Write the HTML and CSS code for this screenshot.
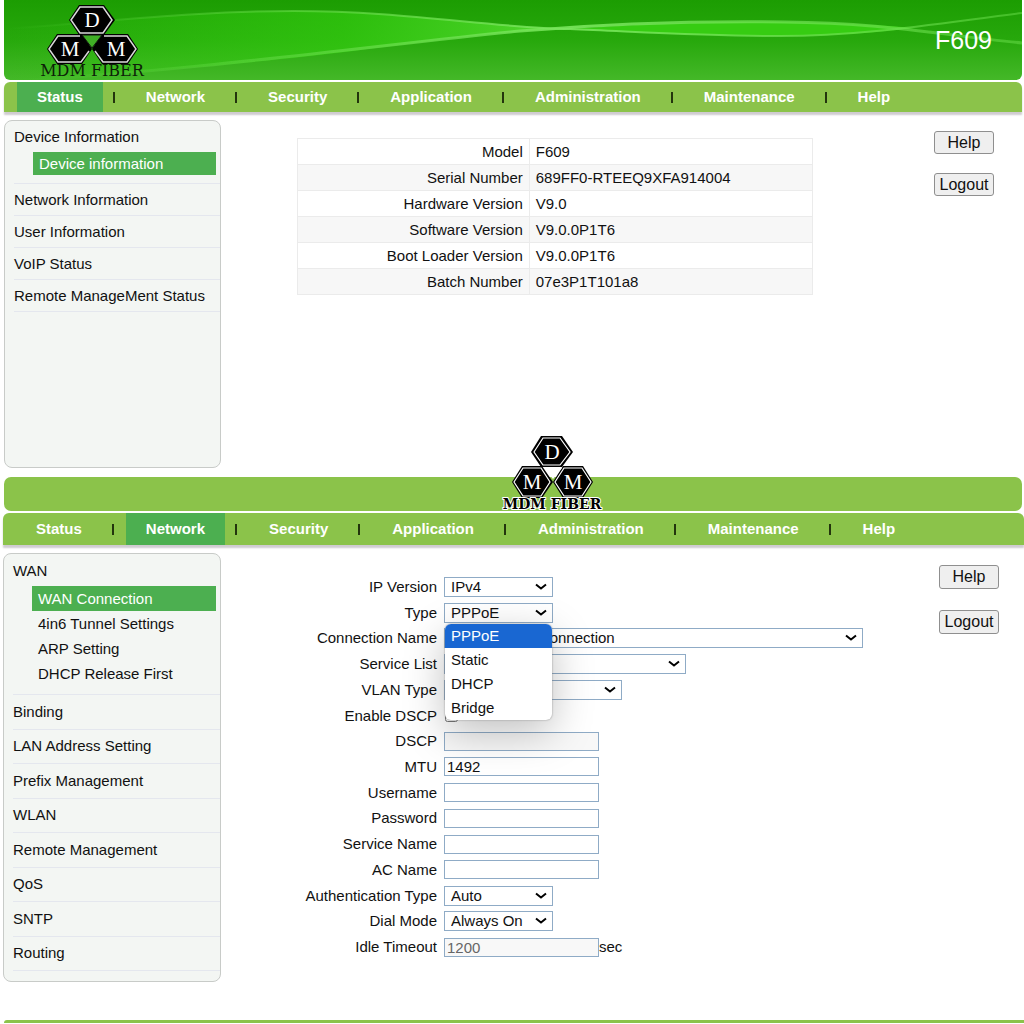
FILE: index.html
```html
<!DOCTYPE html>
<html lang="en">
<head>
<meta charset="utf-8">
<meta name="viewport" content="width=device-width, initial-scale=1">
<title>F609</title>
<link rel="stylesheet" href="styles.css">
</head>
<body>
<section class="screen screen-status">
  <header class="banner">
    <svg class="banner-art" viewBox="0 0 1018 80" preserveAspectRatio="none" aria-hidden="true">
      <defs>
        <linearGradient id="base" x1="0" y1="0" x2="0" y2="1">
          <stop offset="0" stop-color="#1c9d02"/>
          <stop offset="0.5" stop-color="#27a80c"/>
          <stop offset="1" stop-color="#44b828"/>
        </linearGradient>
        <linearGradient id="glow" x1="0" y1="0" x2="1" y2="0">
          <stop offset="0" stop-color="#34d010" stop-opacity="0"/>
          <stop offset="0.6" stop-color="#34d010" stop-opacity="0.6"/>
          <stop offset="1" stop-color="#5ade35" stop-opacity="0.9"/>
        </linearGradient>
        <linearGradient id="edge" x1="0" y1="0" x2="1" y2="0">
          <stop offset="0" stop-color="#6ade4c" stop-opacity="0"/>
          <stop offset="0.25" stop-color="#6ade4c" stop-opacity="0.5"/>
          <stop offset="0.55" stop-color="#7ae65e" stop-opacity="0.9"/>
          <stop offset="1" stop-color="#6ade4c" stop-opacity="0.5"/>
        </linearGradient>
      </defs>
      <rect width="1018" height="80" fill="url(#base)"/>
      <path d="M0 29 C120 20 200 11 290 11 C400 11 490 28 566 29 C490 30 400 46 290 58 C180 69 80 76 20 80 L0 80 Z" fill="url(#glow)"/>
      <path d="M566 29 C640 24 710 21 780 22 C840 23 880 25 910 28 C870 33 830 36 776 36 C690 36 630 32 566 29 Z" fill="#36cc12"/>
      <path d="M0 29 C120 20 200 11 290 11 C400 11 490 28 566 29 C640 32 700 36 776 36 C860 36 930 24 1018 13" fill="none" stroke="url(#edge)" stroke-width="2"/>
      <path d="M20 80 C180 72 400 42 516 31 C600 24 700 21 780 22 C880 23 930 34 1018 43" fill="none" stroke="url(#edge)" stroke-width="3"/>
    </svg>
    <svg class="logo logo-banner" viewBox="0 0 116 78" role="img" aria-label="MDM Fiber">
      <g fill="#000">
        <path d="M35 19 L45 4 H70 L81 19 L70 34 H45 Z"/>
        <path d="M13 48 L23 33 H48 L58 48 L48 63 H23 Z"/>
        <path d="M58 48 L68 33 H94 L104 48 L94 63 H68 Z"/>
      </g>
      <path d="M48 34 H68 L58 47 Z" fill="#3faf25" stroke="#111" stroke-width="1"/>
      <g fill="none" stroke="#d9d9d9" stroke-width="1.5">
        <path d="M37 19 L46 6 H69 L78 19 L69 32 H46 Z"/>
        <path d="M46 35 H24 L15 48 L24 61 H47 L55 50"/>
        <path d="M70 35 H93 L102 48 L93 61 H69 L61 50"/>
      </g>
      <g class="logo-letter">
        <text x="58" y="26">D</text>
        <text x="36" y="55">M</text>
        <text x="82" y="55">M</text>
      </g>
      <text class="logo-name" x="58" y="75">MDM FIBER</text>
    </svg>
    <h1 class="model">F609</h1>
  </header>
  <nav class="tabs" aria-label="Status menu">
    <ul class="tab-list">
      <li><a class="tab active" href="#">Status</a></li>
      <li><a class="tab" href="#">Network</a></li>
      <li><a class="tab" href="#">Security</a></li>
      <li><a class="tab" href="#">Application</a></li>
      <li><a class="tab" href="#">Administration</a></li>
      <li><a class="tab" href="#">Maintenance</a></li>
      <li><a class="tab" href="#">Help</a></li>
    </ul>
  </nav>
  <div class="content">
    <aside class="sidebar">
      <a class="side-title" href="#">Device Information</a>
      <ul class="side-sub">
        <li><a class="active" href="#">Device information</a></li>
      </ul>
      <ul class="side-list">
        <li><a href="#">Network Information</a></li>
        <li><a href="#">User Information</a></li>
        <li><a href="#">VoIP Status</a></li>
        <li><a href="#">Remote ManageMent Status</a></li>
      </ul>
    </aside>
    <main class="panel">
      <table class="info">
        <tbody>
          <tr><th scope="row">Model</th><td>F609</td></tr>
          <tr><th scope="row">Serial Number</th><td>689FF0-RTEEQ9XFA914004</td></tr>
          <tr><th scope="row">Hardware Version</th><td>V9.0</td></tr>
          <tr><th scope="row">Software Version</th><td>V9.0.0P1T6</td></tr>
          <tr><th scope="row">Boot Loader Version</th><td>V9.0.0P1T6</td></tr>
          <tr><th scope="row">Batch Number</th><td>07e3P1T101a8</td></tr>
        </tbody>
      </table>
    </main>
    <div class="actions">
      <button type="button">Help</button>
      <button type="button">Logout</button>
    </div>
  </div>
  <div class="strip">
    <svg class="logo logo-strip" viewBox="0 0 108 76" role="img" aria-label="MDM Fiber">
      <g fill="#000">
        <path d="M33 17 L43 1 H64 L75 17 L64 32 H43 Z"/>
        <path d="M14 47 L24 31 H44 L55 47 L44 63 H24 Z"/>
        <path d="M55 47 L65 31 H85 L95 47 L85 63 H65 Z"/>
      </g>
      <path d="M46 33 H64 L55 44 Z" fill="#fff"/>
      <g fill="none" stroke="#fff" stroke-width="1.2">
        <path d="M36 17 L45 3 H62 L72 17 L62 30 H45 Z"/>
        <path d="M16 47 L25 33 H43 L52 47 L43 61 H25 Z"/>
        <path d="M57 47 L66 33 H84 L93 47 L84 61 H66 Z"/>
      </g>
      <g class="logo-letter">
        <text x="54" y="24">D</text>
        <text x="34" y="54">M</text>
        <text x="75" y="54">M</text>
      </g>
      <text class="logo-name outlined" x="54" y="74">MDM FIBER</text>
    </svg>
  </div>
</section>

<section class="screen screen-network">
  <nav class="tabs" aria-label="Network menu">
    <ul class="tab-list">
      <li><a class="tab" href="#">Status</a></li>
      <li><a class="tab active" href="#">Network</a></li>
      <li><a class="tab" href="#">Security</a></li>
      <li><a class="tab" href="#">Application</a></li>
      <li><a class="tab" href="#">Administration</a></li>
      <li><a class="tab" href="#">Maintenance</a></li>
      <li><a class="tab" href="#">Help</a></li>
    </ul>
  </nav>
  <div class="content">
    <aside class="sidebar">
      <a class="side-title" href="#">WAN</a>
      <ul class="side-sub">
        <li><a class="active" href="#">WAN Connection</a></li>
        <li><a href="#">4in6 Tunnel Settings</a></li>
        <li><a href="#">ARP Setting</a></li>
        <li><a href="#">DHCP Release First</a></li>
      </ul>
      <ul class="side-list">
        <li><a href="#">Binding</a></li>
        <li><a href="#">LAN Address Setting</a></li>
        <li><a href="#">Prefix Management</a></li>
        <li><a href="#">WLAN</a></li>
        <li><a href="#">Remote Management</a></li>
        <li><a href="#">QoS</a></li>
        <li><a href="#">SNTP</a></li>
        <li><a href="#">Routing</a></li>
      </ul>
    </aside>
    <form class="wan-form">
      <div class="row"><label for="ipver">IP Version</label><select id="ipver" class="w-small"><option>IPv4</option></select></div>
      <div class="row">
        <label for="type">Type</label>
        <div class="combo">
          <select id="type" class="w-small"><option>PPPoE</option></select>
          <ul class="menu" role="listbox" aria-label="Type">
            <li role="option" aria-selected="true">PPPoE</li>
            <li role="option">Static</li>
            <li role="option">DHCP</li>
            <li role="option">Bridge</li>
          </ul>
        </div>
      </div>
      <div class="row"><label for="conn">Connection Name</label><select id="conn" class="w-wide"><option>Create WAN Connection</option></select></div>
      <div class="row"><label for="service">Service List</label><select id="service" class="w-large"><option></option></select></div>
      <div class="row"><label for="vlan">VLAN Type</label><select id="vlan" class="w-medium"><option></option></select></div>
      <div class="row"><label for="endscp">Enable DSCP</label><input type="checkbox" id="endscp"></div>
      <div class="row"><label for="dscp">DSCP</label><input type="text" id="dscp" disabled></div>
      <div class="row"><label for="mtu">MTU</label><input type="text" id="mtu" value="1492"></div>
      <div class="row"><label for="user">Username</label><input type="text" id="user"></div>
      <div class="row"><label for="pass">Password</label><input type="password" id="pass"></div>
      <div class="row"><label for="sname">Service Name</label><input type="text" id="sname"></div>
      <div class="row"><label for="acname">AC Name</label><input type="text" id="acname"></div>
      <div class="row"><label for="auth">Authentication Type</label><select id="auth" class="w-small"><option>Auto</option></select></div>
      <div class="row"><label for="dial">Dial Mode</label><select id="dial" class="w-small"><option>Always On</option></select></div>
      <div class="row"><label for="idle">Idle Timeout</label><span class="with-unit"><input type="text" id="idle" value="1200" disabled>sec</span></div>
    </form>
    <div class="actions">
      <button type="button">Help</button>
      <button type="button">Logout</button>
    </div>
  </div>
  <div class="strip strip-end"></div>
</section>
</body>
</html>
```
FILE: styles.css
```css
* {
  box-sizing: border-box;
}

body {
  margin: 0;
  background: #fff;
  color: #111;
  font: 15px/20px "Liberation Sans", Arial, sans-serif;
}

ul {
  margin: 0;
  padding: 0;
  list-style: none;
}

a {
  color: inherit;
  text-decoration: none;
}

.screen-status {
  padding: 0 2px 0 4px;
}

.screen-network {
  padding-left: 3px;
}

/* Banner */
.banner {
  position: relative;
  display: flex;
  align-items: center;
  justify-content: space-between;
  height: 80px;
  padding: 0 30px;
  border-radius: 0 0 6px 6px;
  overflow: hidden;
}

.banner-art {
  position: absolute;
  inset: 0;
  width: 100%;
  height: 100%;
}

.logo {
  display: block;
  font-family: "Liberation Serif", serif;
}

.logo-banner {
  position: relative;
  width: 116px;
  height: 78px;
}

.logo-letter {
  fill: #fff;
  font-size: 21px;
  text-anchor: middle;
}

.logo-name {
  fill: #0d1f08;
  font-family: "DejaVu Serif", serif;
  font-size: 16px;
  text-anchor: middle;
}

.logo-name.outlined {
  fill: #000;
  stroke: #fff;
  stroke-width: 2px;
  paint-order: stroke;
  font-size: 14px;
  font-weight: bold;
}

.model {
  position: relative;
  margin: 0;
  color: #fff;
  font-size: 25px;
  font-weight: normal;
}

/* Tabs */
.tabs {
  margin-top: 2px;
  padding-left: 13px;
  background: #8bc34a;
  border-radius: 6px 6px 0 0;
  box-shadow: 0 3px 2px #cfcbd0;
}

.tab-list,
.tab-list li {
  display: flex;
  align-items: center;
}

.tab-list li + li::before {
  content: "";
  width: 2px;
  height: 11px;
  margin: 0 11px 0 10px;
  background: #23350d;
}

.tab {
  padding: 0 20px;
  color: #fff;
  font-weight: bold;
  line-height: 30px;
}

.tab.active {
  background: #4caf50;
}

.screen-network .tab {
  line-height: 32px;
}

.screen-network .tab-list li + li::before {
  margin: 0 12px 0 10px;
}

/* Columns */
.content {
  display: grid;
  grid-template-columns: 217px 1fr auto;
  margin-top: 8px;
}

.sidebar {
  min-height: 348px;
  padding: 6px 0 10px 9px;
  border: 1px solid #c8cbc8;
  border-radius: 8px;
  background: #f3f6f3;
}

.side-title {
  display: block;
  line-height: 20px;
}

.side-sub {
  padding: 5px 4px 8px 19px;
  border-bottom: 1px solid #e4e7ee;
}

.side-sub a {
  display: block;
  padding-left: 6px;
  line-height: 23px;
}

.side-sub .active {
  background: #4caf50;
  color: #fff;
}

.side-list {
  display: grid;
  grid-auto-rows: 1fr;
}

.side-list li {
  display: flex;
  align-items: center;
  height: 32px;
  border-bottom: 1px solid #e4e7ee;
}

.screen-network .sidebar {
  padding-top: 7px;
}

.screen-network .content {
  grid-template-columns: 218px 1fr auto;
}

.screen-network .side-sub a {
  line-height: 25px;
}

.screen-network .side-list {
  height: 276px;
}

.screen-network .side-list li {
  height: auto;
}

.panel {
  padding: 18px 121px 0 76px;
}

.info {
  width: 100%;
  border-collapse: collapse;
}

.info th,
.info td {
  height: 26px;
  padding: 0 6px;
  border: 1px solid #ebebeb;
  font-weight: normal;
  text-align: left;
}

.info th {
  width: 45%;
  text-align: right;
}

.info tr:nth-child(even) {
  background: #f7f7f7;
}

.actions {
  display: flex;
  flex-direction: column;
  gap: 19px;
  padding: 11px 28px 0 0;
}

.actions button {
  width: 60px;
  height: 23px;
  padding: 0;
  border: 1px solid #8f8f8f;
  border-radius: 3px;
  background: #efefef;
  color: #111;
  font: 16px/20px "Liberation Sans", Arial, sans-serif;
}

.screen-network .actions {
  gap: 21px;
  padding: 12px 25px 0 0;
}

.screen-network .actions button {
  height: 24px;
}

/* Divider strips */
.strip {
  position: relative;
  height: 34px;
  margin-top: 9px;
  border-radius: 7px;
  background: #8bc34a;
}

.strip-end {
  height: 3px;
  margin: 38px 0 0 1px;
  border-radius: 6px 0 0 0;
}

.logo-strip {
  position: absolute;
  left: 494px;
  bottom: 0;
  width: 108px;
  height: 76px;
}

/* WAN form */
.wan-form {
  display: grid;
  grid-auto-rows: 1fr;
  height: 386px;
  margin-top: 21px;
}

.row {
  display: grid;
  grid-template-columns: 216px 1fr;
  column-gap: 7px;
  align-items: center;
  justify-items: start;
}

.row label {
  justify-self: end;
}

.row select,
.row input[type="text"],
.row input[type="password"] {
  height: 20px;
  padding: 0 2px;
  border: 1px solid #8fabc6;
  border-radius: 0;
  background-color: #fff;
  color: #111;
  font: 15px/18px "Liberation Sans", Arial, sans-serif;
}

.row select {
  appearance: none;
  padding: 0 20px 0 6px;
  background-image: url("data:image/svg+xml,%3Csvg xmlns='http://www.w3.org/2000/svg' width='12' height='8' viewBox='0 0 12 8'%3E%3Cpath d='M1 1.5 Q3.5 3.5 6 5.5 Q8.5 3.5 11 1.5' fill='none' stroke='%23000' stroke-width='2'/%3E%3C/svg%3E");
  background-repeat: no-repeat;
  background-position: right 5px center;
}

.row input[type="text"],
.row input[type="password"] {
  width: 155px;
  height: 19px;
}

.row input[type="text"]:disabled {
  background-color: #f8f8f8;
  color: #666;
}

.row input[type="checkbox"] {
  margin: 0 1px;
}

.row .w-small {
  width: 109px;
}

.row .w-medium {
  width: 178px;
}

.row .w-large {
  width: 242px;
}

.row .w-wide {
  width: 419px;
}

.with-unit {
  display: flex;
  align-items: center;
}

.combo {
  position: relative;
  display: flex;
}

.menu {
  position: absolute;
  z-index: 1;
  top: 21px;
  left: 1px;
  width: 107px;
  overflow: hidden;
  border-radius: 6px;
  background: #fff;
  box-shadow: 0 0 2px #888, 0 12px 40px rgba(0, 0, 0, 0.25);
}

.menu li {
  padding: 0 6px;
  line-height: 24px;
}

.menu li[aria-selected="true"] {
  background: #1967d2;
  color: #fff;
}
```
